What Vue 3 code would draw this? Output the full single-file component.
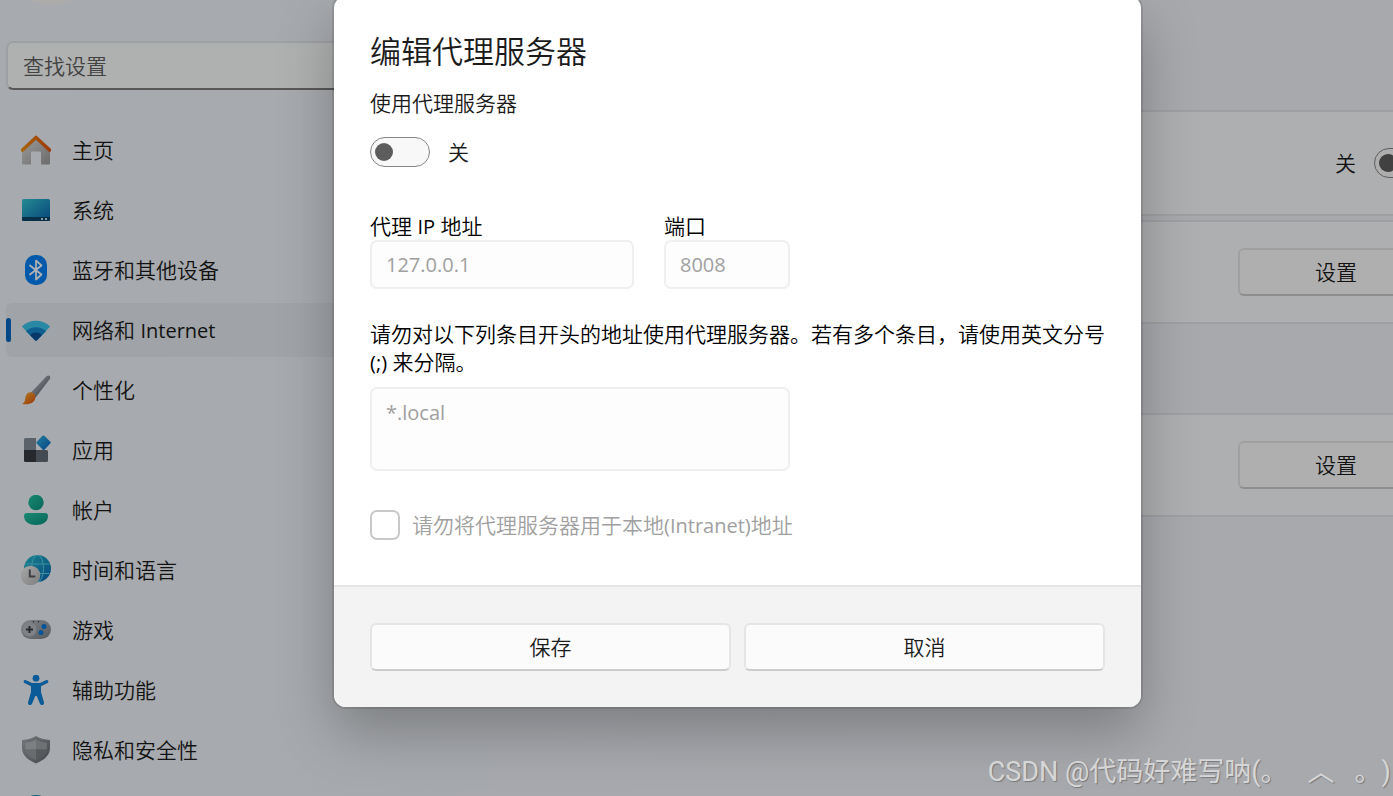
<script setup>
import { ref } from 'vue'

const search = ref('')
const useProxy = ref(false)
const useScript = ref(false)
const proxyIp = ref('127.0.0.1')
const proxyPort = ref('8008')
const exceptions = ref('*.local')
const skipLocal = ref(false)

const navList = [
    { id: 'home', label: '主页' },
    { id: 'system', label: '系统' },
    { id: 'bluetooth', label: '蓝牙和其他设备' },
    { id: 'network', label: '网络和 ', latin: 'Internet' },
    { id: 'personal', label: '个性化' },
    { id: 'apps', label: '应用' },
    { id: 'accounts', label: '帐户' },
    { id: 'time', label: '时间和语言' },
    { id: 'gaming', label: '游戏' },
    { id: 'access', label: '辅助功能' },
    { id: 'privacy', label: '隐私和安全性' }
]
const current = ref('network')
</script>

<template>
    <div class="page">
        <aside class="sidebar">
            <div class="avatar"></div>
            <input class="search" type="text" v-model="search" placeholder="查找设置" aria-label="查找设置">
            <nav class="nav">
                <a v-for="item in navList" :key="item.id" href="#" class="nav-item"
                    :class="{ active: item.id === current }" @click.prevent="current = item.id">
                    <svg class="nav-icon" viewBox="0 0 30 30" aria-hidden="true">
                        <g v-if="item.id === 'home'">
                            <path d="M1 14 15 2l14 12v14a1.500 1.500 0 0 1-1.500 1.500H20V17.500a1 1 0 0 0-1-1h-8a1 1 0 0 0-1 1v12H2.500A1.500 1.500 0 0 1 1 28z" fill="url(#gHome)" />
                            <path d="M1.500 15 15 2.500 28.500 15" fill="none" stroke="url(#gRoof)" stroke-width="3.600" stroke-linecap="round" stroke-linejoin="round" />
                        </g>
                        <g v-else-if="item.id === 'system'">
                            <rect x="1" y="4" width="28" height="22" rx="1.500" fill="url(#gScreen)" />
                            <path d="M1 22h28v2.500a1.500 1.500 0 0 1-1.500 1.500h-25A1.500 1.500 0 0 1 1 24.500z" fill="#0b4468" />
                            <path d="M20 23h2v2h-2zM24 23h2v2h-2z" fill="#c8dbe8" />
                        </g>
                        <g v-else-if="item.id === 'bluetooth'">
                            <rect x="4" y="0" width="22" height="30" rx="10" fill="#0080f5" />
                            <path d="m9 10.500 11.500 9L15 24.500v-19l5.500 5L9 19.500" fill="none" stroke="#fff" stroke-width="1.700" stroke-linejoin="round" stroke-linecap="round" />
                        </g>
                        <g v-else-if="item.id === 'network'">
                            <path d="M.800 11.500a20.500 20.500 0 0 1 28.400 0L16 25.300a1.500 1.500 0 0 1-2 0z" fill="#3cc4ec" />
                            <path d="M5 16.200a14.500 14.500 0 0 1 20 0l-9 9.100a1.500 1.500 0 0 1-2 0z" fill="#1688d0" />
                            <path d="M9 20a8.500 8.500 0 0 1 12 0l-5 5.300a1.500 1.500 0 0 1-2 0z" fill="#0d5299" />
                        </g>
                        <g v-else-if="item.id === 'personal'">
                            <path d="M9.500 18 25.500 1.300c2.500-2 4.700.2 3.300 2.700L14.500 22.800z" fill="url(#gHandle)" />
                            <path d="M9.500 17.300c3.500.2 5.300 2.500 4.800 5.700-.8 5.500-7.300 7.200-13.500 5.700 1.800-.8 3-1.700 3.300-4.300.4-4.300 2.200-7.200 5.400-7.100z" fill="url(#gBrush)" />
                        </g>
                        <g v-else-if="item.id === 'apps'">
                            <path d="M4.500 3H15v12H3V4.500A1.500 1.500 0 0 1 4.500 3z" fill="#858d97" />
                            <path d="M3 15h12v12H4.500A1.500 1.500 0 0 1 3 25.500z" fill="#363c43" />
                            <path d="M15 15h10.500a1.500 1.500 0 0 1 1.500 1.500v9a1.500 1.500 0 0 1-1.500 1.500H15z" fill="#626b76" />
                            <path d="m21 1.200 1-.7a1.500 1.500 0 0 1 1.600.4l5.500 5.700a1.500 1.500 0 0 1 0 2.200l-5.500 5.700a1.500 1.500 0 0 1-2.100 0L16 8.800a1.500 1.500 0 0 1 0-2.200z" fill="url(#gDiamond)" />
                        </g>
                        <g v-else-if="item.id === 'accounts'" fill="url(#gUser)">
                            <circle cx="15" cy="7.500" r="7.700" />
                            <path d="M6 18h18a3 3 0 0 1 3 3c0 6-5.500 9-12 9S3 27 3 21a3 3 0 0 1 3-3z" />
                        </g>
                        <g v-else-if="item.id === 'time'">
                            <circle cx="16.500" cy="13.500" r="13.500" fill="url(#gGlobe)" />
                            <g fill="none" stroke="#58d0e5" stroke-width="1">
                                <ellipse cx="16.500" cy="13.500" rx="6" ry="13.500" />
                                <path d="M4.500 9h24M4.500 18.500h24" />
                            </g>
                            <circle cx="9.500" cy="20.500" r="9.800" fill="url(#gClock)" />
                            <path d="M8.800 14.500v7h5.500" fill="none" stroke="#565a60" stroke-width="2" />
                        </g>
                        <g v-else-if="item.id === 'gaming'">
                            <rect x="0" y="5" width="30" height="19" rx="9.500" fill="url(#gPad)" />
                            <circle cx="8.500" cy="14.500" r="7" fill="#b7bbc1" />
                            <path d="M8.500 11v7M5 14.500h7" stroke="#3b3e42" stroke-width="2" />
                            <circle cx="23" cy="11.500" r="2.500" fill="#0079dc" />
                            <circle cx="20" cy="17.500" r="2.500" fill="#0079dc" />
                            <circle cx="12.500" cy="6.800" r=".8" fill="#3b3e42" />
                            <circle cx="17.500" cy="6.800" r=".8" fill="#3b3e42" />
                        </g>
                        <g v-else-if="item.id === 'access'" fill="#0f83da">
                            <circle cx="15" cy="3.200" r="3.400" />
                            <path d="M4.500 5 11 8h8l6.500-3c2-.6 2.500 2.200 1 3l-6.500 3.200V17l3 10.500c.4 2.600-3 3.300-4 1.200L15.700 21h-1.400L11 28.700c-1 2.100-4.400 1.400-4-1.200L10 17v-5.800L3.500 8c-1.500-.8-1-3.600 1-3z" />
                        </g>
                        <g v-else>
                            <path d="M15 1c3.500 2.400 8 3.700 14 4v8c0 7-5.500 12-14 15.500C6.500 25 1 20 1 13V5c6-.3 10.500-1.600 14-4z" fill="url(#gShield)" />
                            <path d="M15 4.500v10H4.200V7.800C8.700 7.400 12 6.500 15 4.500z" fill="#b4b8bc" />
                            <path d="M15 4.500c3 2 6.300 2.900 10.800 3.300v6.700H15z" fill="#9fa3a7" />
                            <path d="M4.200 14.500H15v10.700C8.500 22.200 4.600 19 4.200 14.500z" fill="#979b9f" />
                            <path d="M15 14.500h10.800c-.4 4.500-4.300 7.700-10.800 10.700z" fill="#7d8186" />
                        </g>
                    </svg>
                    <span>{{ item.label }}<span v-if="item.latin" class="latin">{{ item.latin }}</span></span>
                </a>
                <div class="nav-item">
                    <svg class="nav-icon" viewBox="0 0 30 30" aria-hidden="true">
                        <circle cx="15" cy="15" r="15" fill="#0f83c9" />
                    </svg>
                </div>
            </nav>
            <svg class="defs" width="0" height="0" aria-hidden="true">
                <defs>
                    <linearGradient id="gHome" x1="0" y1="0" x2="1" y2="1"><stop offset="0" stop-color="#e0e0e0" /><stop offset="1" stop-color="#9c9a99" /></linearGradient>
                    <linearGradient id="gRoof"><stop offset="0" stop-color="#f09013" /><stop offset="1" stop-color="#e0540c" /></linearGradient>
                    <linearGradient id="gScreen" x1="0" y1="0" x2="1" y2="1"><stop offset="0" stop-color="#36c6d2" /><stop offset="1" stop-color="#0865b0" /></linearGradient>
                    <linearGradient id="gHandle" x1="0" y1="0" x2="1" y2="1"><stop offset=".3" stop-color="#a9aeb5" /><stop offset=".7" stop-color="#6e737c" /></linearGradient>
                    <linearGradient id="gBrush" x1="0" y1="0" x2="1" y2="1"><stop offset="0" stop-color="#ffb32c" /><stop offset="1" stop-color="#df5210" /></linearGradient>
                    <linearGradient id="gDiamond" x1="0" y1="0" x2="1" y2="1"><stop offset="0" stop-color="#36b5e4" /><stop offset="1" stop-color="#0864c0" /></linearGradient>
                    <linearGradient id="gUser" x1="0" y1="0" x2="1" y2="1"><stop offset="0" stop-color="#25c5a3" /><stop offset="1" stop-color="#0b9281" /></linearGradient>
                    <linearGradient id="gGlobe" x1="0" y1="0" x2="1" y2="1"><stop offset="0" stop-color="#28c0cc" /><stop offset="1" stop-color="#0864b4" /></linearGradient>
                    <linearGradient id="gClock" x1="0" y1="0" x2="1" y2="1"><stop offset="0" stop-color="#f2f2f2" /><stop offset="1" stop-color="#b4b4b6" /></linearGradient>
                    <linearGradient id="gPad" x1="0" y1="0" x2="1" y2="1"><stop offset="0" stop-color="#b9bdc2" /><stop offset="1" stop-color="#7f838b" /></linearGradient>
                    <linearGradient id="gShield" x1="0" y1="0" x2="1" y2="1"><stop offset="0" stop-color="#a8acb0" /><stop offset="1" stop-color="#62666b" /></linearGradient>
                </defs>
            </svg>
        </aside>

        <main class="content">
            <section class="card card-switch">
                <label for="script-switch">关</label>
                <input id="script-switch" class="toggle" type="checkbox" role="switch" v-model="useScript">
            </section>
            <section class="card">
                <button type="button" class="btn btn-set">设置</button>
            </section>
            <section class="card card-manual">
                <button type="button" class="btn btn-set">设置</button>
            </section>
        </main>

        <div class="smoke">
            <form class="dialog" role="dialog" aria-labelledby="dialog-title" @submit.prevent>
                <div class="dialog-body">
                    <h1 id="dialog-title" class="dialog-title">编辑代理服务器</h1>
                    <p class="text">使用代理服务器</p>
                    <div class="switch-row">
                        <input id="proxy-switch" class="toggle" type="checkbox" role="switch" v-model="useProxy">
                        <label for="proxy-switch">{{ useProxy ? '开' : '关' }}</label>
                    </div>
                    <div class="address-row">
                        <div class="field field-ip">
                            <label for="proxy-ip">代理 <span class="latin">IP</span> 地址</label>
                            <input id="proxy-ip" class="box latin" type="text" v-model="proxyIp" :disabled="!useProxy">
                        </div>
                        <div class="field field-port">
                            <label for="proxy-port">端口</label>
                            <input id="proxy-port" class="box latin" type="text" v-model="proxyPort" :disabled="!useProxy">
                        </div>
                    </div>
                    <label class="text except-label" for="except">请勿对以下列条目开头的地址使用代理服务器。若有多个条目，请使用英文分号 <span class="latin">(;)</span> 来分隔。</label>
                    <textarea id="except" class="box area latin" v-model="exceptions" :disabled="!useProxy"></textarea>
                    <div class="check-row">
                        <input id="skip-local" class="check" type="checkbox" v-model="skipLocal" :disabled="!useProxy">
                        <label for="skip-local">请勿将代理服务器用于本地<span class="latin">(Intranet)</span>地址</label>
                    </div>
                </div>
                <div class="dialog-footer">
                    <button type="submit" class="btn">保存</button>
                    <button type="button" class="btn">取消</button>
                </div>
            </form>
        </div>

        <div class="watermark">CSDN @代码好难写呐(。&nbsp;&nbsp;&nbsp;︿&nbsp;&nbsp;&nbsp;。)</div>
    </div>
</template>

<style>
body {
    margin: 0;
    overflow: hidden;
}
</style>

<style scoped>
.page {
    position: relative;
    display: flex;
    height: 100vh;
    overflow: hidden;
    background: linear-gradient(to right, #eff4f9, #f1f2f8);
    color: #1b1b1b;
    font-family: "Open Sans", "Noto Sans CJK SC", sans-serif;
    font-size: 21px;
    font-weight: 350;
    line-height: 28px;
}

.page *,
.page *::before {
    box-sizing: border-box;
}

input,
textarea,
button {
    margin: 0;
    font-family: inherit;
    font-size: inherit;
    font-weight: inherit;
    line-height: inherit;
    color: inherit;
}

.latin {
    font-size: 20px;
    font-weight: 400;
}

span.latin {
    line-height: 20px;
}

/* sidebar */
.sidebar {
    flex: none;
    width: 420px;
    padding-left: 6px;
}

.avatar {
    width: 90px;
    height: 90px;
    margin: -85px 0 36px;
    border-radius: 50%;
    background: #f8f6f4;
}

.search {
    display: block;
    width: 100%;
    height: 49px;
    padding: 0 15px;
    border: 2px solid #e1e5e9;
    border-bottom-color: #7e7e80;
    border-radius: 7px;
    background: #fbfcfd;
}

.search::placeholder {
    color: #5f5f5f;
    opacity: 1;
}

.nav {
    display: flex;
    flex-direction: column;
    gap: 6px;
    margin-top: 33px;
}

.nav-item {
    position: relative;
    display: flex;
    flex: none;
    align-items: center;
    gap: 21px;
    height: 54px;
    padding-left: 15px;
    border-radius: 6px;
    color: #1b1b1b;
    text-decoration: none;
}

.nav-item.active {
    background: #e6eaef;
}

.nav-item.active::before {
    content: "";
    position: absolute;
    left: 0;
    width: 5px;
    height: 24px;
    border-radius: 3px;
    background: #0067c0;
}

.nav-icon {
    width: 30px;
    height: 30px;
}

.defs {
    display: block;
}

/* settings cards behind the dialog, they run past the right edge */
.content {
    flex: 1;
    margin-right: -71px;
    padding-top: 110px;
}

.card {
    display: flex;
    align-items: center;
    justify-content: flex-end;
    gap: 18px;
    height: 104px;
    padding-right: 28px;
    border: 2px solid #e4e5ea;
    background: #f9fbfc;
}

.card-switch {
    height: 106px;
    margin-bottom: 4px;
}

.card-manual {
    margin-top: 89px;
}

.btn {
    height: 48px;
    border: 2px solid #e5e5e5;
    border-bottom-color: #cccccc;
    border-radius: 6px;
    background: #fbfbfb;
    color: #1b1b1b;
}

.btn-set {
    width: 196px;
}

/* controls */
.toggle {
    display: flex;
    flex: none;
    align-items: center;
    width: 60px;
    height: 30px;
    padding: 0 4px;
    border: 1px solid #868686;
    border-radius: 15px;
    background: #f8f8f8;
    appearance: none;
}

.toggle::before {
    content: "";
    width: 18px;
    height: 18px;
    border-radius: 50%;
    background: #5d5d5d;
}

.toggle:checked {
    justify-content: flex-end;
    background: #0067c0;
}

.toggle:checked::before {
    background: #fff;
}

.box {
    display: block;
    width: 100%;
    height: 49px;
    padding: 0 14px;
    border: 2px solid #efefef;
    border-radius: 7px;
    background: #fdfdfd;
}

.box:disabled {
    color: #a0a0a0;
}

.area {
    width: 420px;
    height: 84px;
    padding-top: 10px;
    resize: none;
}

/* dialog */
.smoke {
    position: absolute;
    inset: 0;
    padding: 0 252px 0 334px;
    background: rgba(0, 0, 0, 0.3);
}

.dialog {
    margin-top: -4px;
    overflow: hidden;
    border-radius: 12px;
    background: #fff;
    box-shadow: 0 0 0 2px rgba(0, 0, 0, 0.1), 0 24px 56px rgba(0, 0, 0, 0.26);
}

.dialog-body {
    padding: 34px 36px 45px;
}

.dialog-title {
    margin: 0 0 17px;
    font-size: 31px;
    font-weight: inherit;
    line-height: 42px;
}

.text {
    margin: 0;
}

.switch-row {
    display: flex;
    align-items: center;
    gap: 18px;
    height: 30px;
    margin-top: 20px;
}

.address-row {
    display: flex;
    gap: 30px;
    margin: 45px 0 31px;
    color: #000;
}

.field label {
    display: block;
    height: 28px;
}

.field-ip {
    width: 264px;
}

.field-port {
    width: 126px;
}

.except-label {
    display: block;
    margin-bottom: 11px;
    color: #000;
}

.check-row {
    display: flex;
    align-items: center;
    gap: 12px;
    height: 30px;
    margin-top: 39px;
    color: #a0a0a0;
}

.check {
    width: 30px;
    height: 30px;
    border: 2px solid #c9c9c9;
    border-radius: 7px;
    background: #fff;
    appearance: none;
}

.dialog-footer {
    display: grid;
    grid-template-columns: 1fr 1fr;
    gap: 13px;
    padding: 36px;
    border-top: 2px solid #e5e5e5;
    background: #f3f3f3;
}

.watermark {
    position: absolute;
    right: 2px;
    bottom: 6px;
    color: #d6d6d6;
    font-family: Roboto, "Noto Sans CJK SC", sans-serif;
    font-size: 27px;
    font-weight: 400;
    line-height: 36px;
    text-spacing-trim: space-all;
    white-space: pre;
    text-shadow: 1px 1px 1px #77797c;
}
</style>
